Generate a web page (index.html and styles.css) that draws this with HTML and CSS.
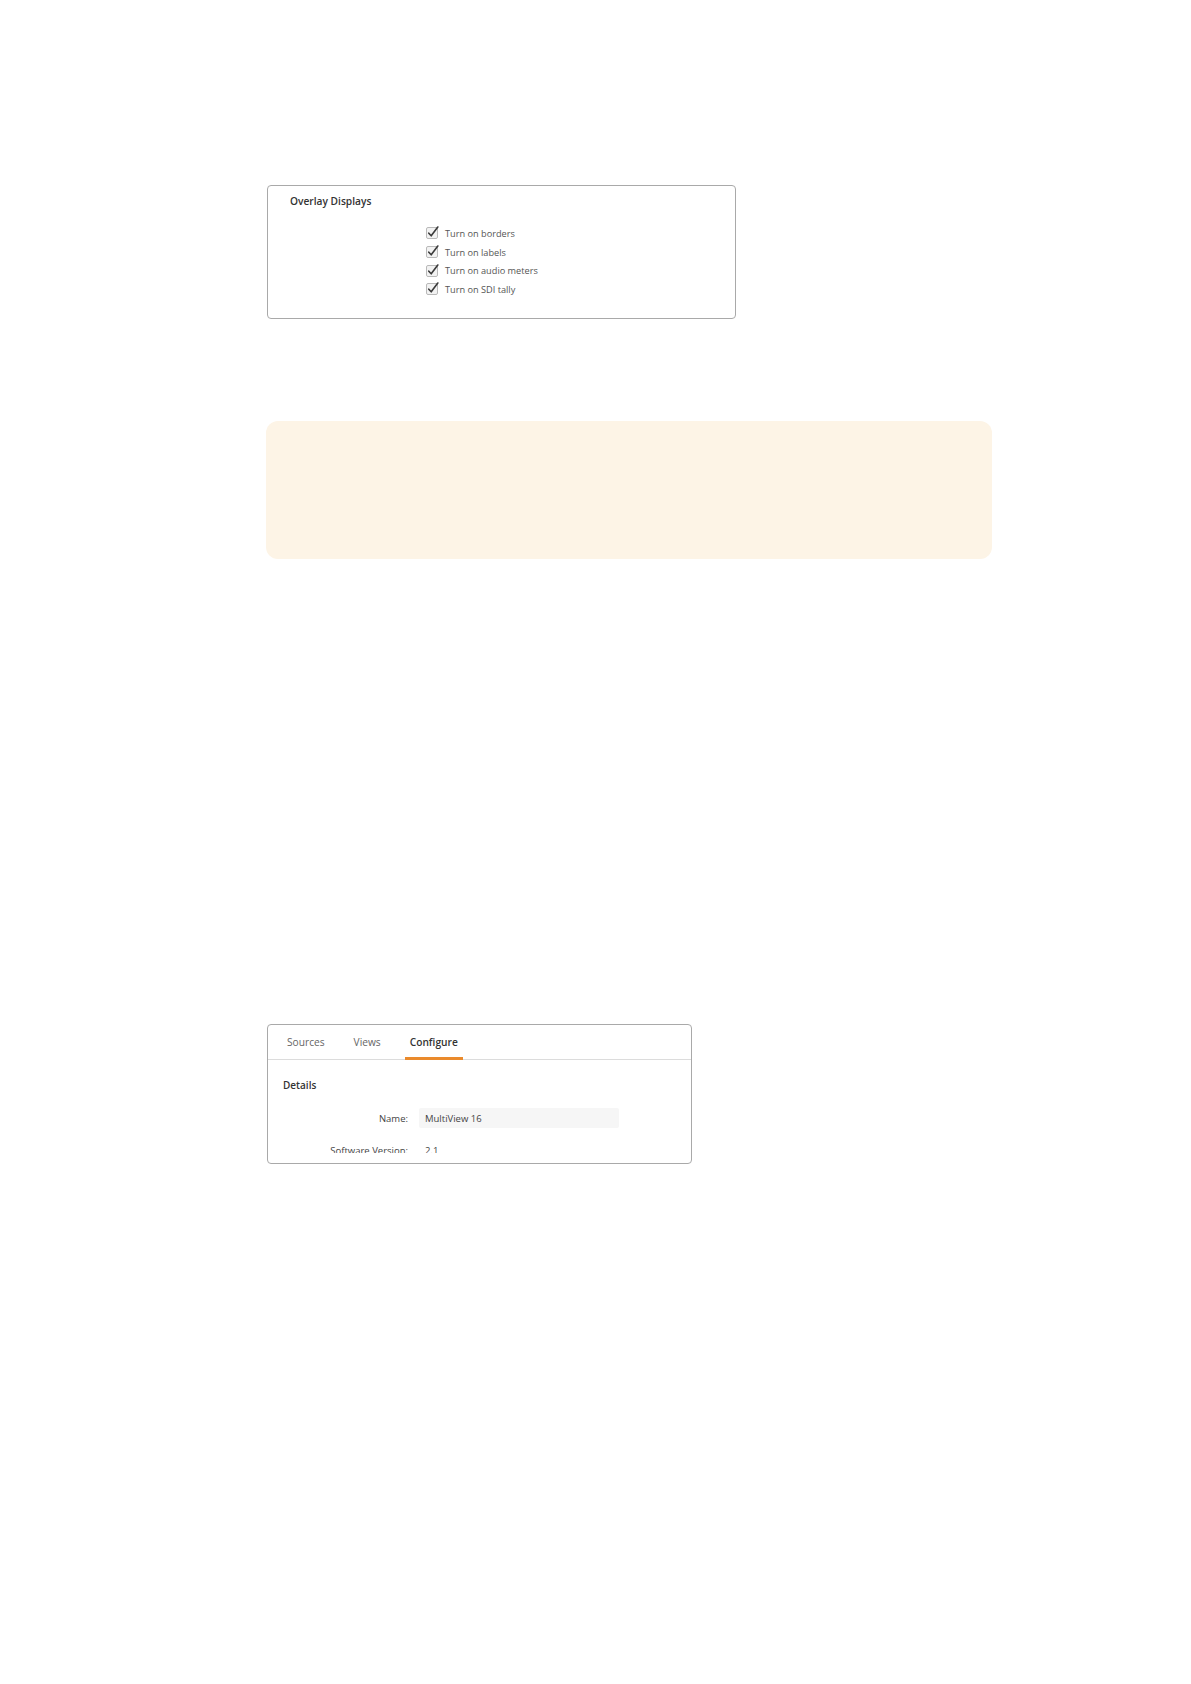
FILE: index.html
```html
<!DOCTYPE html>
<html>
<head>
<meta charset="utf-8">
<link rel="stylesheet" href="styles.css">
</head>
<body>
<div class="page">
  <section class="overlay-card">
    <h3 class="card-title">Overlay Displays</h3>
    <ul class="checks">
      <li class="check-row"><svg class="cb" viewBox="0 0 13 13" width="13" height="13"><rect x="0.5" y="1.5" width="11" height="11" rx="1.5" fill="#f2f2f2" stroke="#b9b9b9"/><path d="M2.8 7.2 L5.2 9.8 L11.8 1" fill="none" stroke="#3a3a3a" stroke-width="1.6" stroke-linecap="round" stroke-linejoin="round"/></svg><span>Turn on borders</span></li>
      <li class="check-row"><svg class="cb" viewBox="0 0 13 13" width="13" height="13"><rect x="0.5" y="1.5" width="11" height="11" rx="1.5" fill="#f2f2f2" stroke="#b9b9b9"/><path d="M2.8 7.2 L5.2 9.8 L11.8 1" fill="none" stroke="#3a3a3a" stroke-width="1.6" stroke-linecap="round" stroke-linejoin="round"/></svg><span>Turn on labels</span></li>
      <li class="check-row"><svg class="cb" viewBox="0 0 13 13" width="13" height="13"><rect x="0.5" y="1.5" width="11" height="11" rx="1.5" fill="#f2f2f2" stroke="#b9b9b9"/><path d="M2.8 7.2 L5.2 9.8 L11.8 1" fill="none" stroke="#3a3a3a" stroke-width="1.6" stroke-linecap="round" stroke-linejoin="round"/></svg><span>Turn on audio meters</span></li>
      <li class="check-row"><svg class="cb" viewBox="0 0 13 13" width="13" height="13"><rect x="0.5" y="1.5" width="11" height="11" rx="1.5" fill="#f2f2f2" stroke="#b9b9b9"/><path d="M2.8 7.2 L5.2 9.8 L11.8 1" fill="none" stroke="#3a3a3a" stroke-width="1.6" stroke-linecap="round" stroke-linejoin="round"/></svg><span>Turn on SDI tally</span></li>
    </ul>
  </section>

  <div class="note"></div>

  <section class="tabs-card">
    <nav class="tabs">
      <span class="tab">Sources</span>
      <span class="tab">Views</span>
      <span class="tab active">Configure</span>
    </nav>
    <div class="tab-body">
      <div class="tab-scroll">
        <h4 class="section-title">Details</h4>
        <div class="field">
          <span class="label">Name:</span>
          <span class="input">MultiView 16</span>
        </div>
        <div class="field">
          <span class="label">Software Version:</span>
          <span class="value">2.1</span>
        </div>
      </div>
    </div>
  </section>
</div>
</body>
</html>
```

FILE: styles.css
```css
html, body {
  margin: 0;
  padding: 0;
  background: #ffffff;
}

body {
  font-family: "Open Sans", "Noto Sans", "DejaVu Sans", sans-serif;
  color: #444;
}

.page {
  padding: 185px 0 0 267px;
  display: flex;
  flex-direction: column;
  align-items: flex-start;
}

/* Overlay card */
.overlay-card {
  box-sizing: border-box;
  width: 469px;
  height: 134px;
  border: 1.5px solid #a9a9a9;
  border-radius: 4px;
  padding: 7px 0 0 22px;
}

.card-title {
  margin: 0;
  font-size: 10.2px;
  font-weight: 600;
  line-height: 16px;
  color: #333;
}

.checks {
  list-style: none;
  margin: 15px 0 0 136px;
  padding: 0;
}

.check-row {
  display: flex;
  align-items: center;
  gap: 6px;
  height: 18.7px;
  font-size: 9.2px;
  color: #555;
}

.cb {
  flex: none;
  margin-top: -1px;
}

/* Note */
.note {
  margin-top: 102px;
  margin-left: -1px;
  width: 726px;
  height: 138px;
  background: #fdf4e6;
  border-radius: 12px;
}

/* Tabs card */
.tabs-card {
  box-sizing: border-box;
  margin-top: 465px;
  width: 425px;
  height: 140px;
  border: 1.5px solid #a9a9a9;
  border-radius: 4px;
  display: flex;
  flex-direction: column;
}

.tabs {
  display: flex;
  gap: 19px;
  height: 34px;
  padding-left: 14px;
  border-bottom: 1px solid #dcdcdc;
}

.tab {
  display: flex;
  align-items: center;
  padding: 0 5px;
  font-size: 10.2px;
  color: #666;
  border-bottom: 3px solid transparent;
  margin-bottom: -1px;
  padding-top: 2px;
}

.tab.active {
  color: #333;
  font-weight: 600;
  border-bottom-color: #ea8a2c;
}

.tab-body {
  flex: 1;
  padding-bottom: 10px;
  display: flex;
  flex-direction: column;
  min-height: 0;
}

.tab-scroll {
  flex: 1;
  overflow: hidden;
  min-height: 0;
  padding: 17px 0 0 15px;
}

.section-title {
  margin: 0;
  font-size: 10px;
  font-weight: 600;
  color: #333;
  line-height: 16px;
}

.field {
  display: flex;
  align-items: center;
  gap: 11px;
  margin-top: 15px;
  font-size: 9.5px;
  color: #444;
}

.field + .field {
  margin-top: 16px;
}

.label {
  width: 125px;
  text-align: right;
}

.input {
  box-sizing: border-box;
  width: 200px;
  height: 20px;
  background: #f6f6f6;
  border-radius: 2px;
  padding-left: 6px;
  display: flex;
  align-items: center;
}

.value {
  padding-left: 6px;
}
```
